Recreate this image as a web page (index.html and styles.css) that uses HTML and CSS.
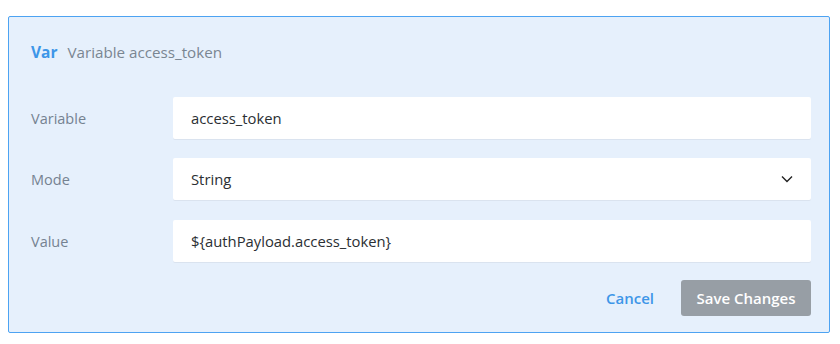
FILE: index.html
```html
<!DOCTYPE html>
<html lang="en">
<head>
    <meta charset="UTF-8">
    <title>Variable access_token</title>
    <link rel="stylesheet" href="styles.css">
</head>
<body>

<!-- Variable editor panel -->
<div class="panel">
    <div class="panel-header">
        <span class="tag">Var</span>
        <span class="title">Variable access_token</span>
    </div>

    <div class="form">
        <div class="row">
            <label>Variable</label>
            <div class="field">access_token</div>
        </div>
        <div class="row">
            <label>Mode</label>
            <div class="field select">
                <span>String</span>
                <svg width="12" height="8" viewBox="0 0 12 8"><path d="M1 1.5l5 5 5-5" fill="none" stroke="#222" stroke-width="1.4"/></svg>
            </div>
        </div>
        <div class="row">
            <label>Value</label>
            <div class="field">${authPayload.access_token}</div>
        </div>
    </div>

    <div class="actions">
        <button class="cancel">Cancel</button>
        <button class="save">Save Changes</button>
    </div>
</div>

</body>
</html>
```

FILE: styles.css
```css
body {
    font-family: "Open Sans", Lato, sans-serif;
    background-color: #fff;
    margin: 0;
    padding: 16px 10px 12px 8px;
}

.panel {
    background-color: #e6f0fc;
    border: 1px solid #4da3f2;
    border-radius: 2px;
    box-sizing: border-box;
    height: 317px;
    padding: 0 18px 0 22px;
}

.panel-header {
    display: flex;
    align-items: baseline;
    height: 70px;
    padding-top: 24px;
    box-sizing: border-box;
}

.tag {
    color: #3d96e8;
    font-weight: bold;
    font-size: 15.5px;
    margin-right: 10px;
}

.title {
    color: #7a8692;
    font-size: 15.2px;
}

.form {
    padding-top: 10px;
}

.row {
    display: flex;
    align-items: center;
    margin-bottom: 19px;
}

.row:nth-child(2) {
    margin-bottom: 20px;
}

.row label {
    width: 142px;
    color: #758291;
    font-size: 14.5px;
}

.field {
    flex: 1;
    height: 42px;
    background-color: #fff;
    border-radius: 2px;
    box-shadow: 0 1px 0 rgba(0, 0, 0, 0.05);
    display: flex;
    align-items: center;
    padding: 0 18px;
    font-size: 14.8px;
    color: #2b2f33;
}

.select {
    justify-content: space-between;
}

.actions {
    display: flex;
    justify-content: flex-end;
    align-items: center;
    gap: 27px;
    margin-top: -1px;
}

.actions button {
    font-family: inherit;
    font-size: 15px;
    font-weight: 600;
    border: none;
    cursor: pointer;
}

.cancel {
    background: none;
    color: #3d96e8;
    padding: 0;
}

.save {
    background-color: #979ea5;
    color: #fff;
    width: 130px;
    height: 36px;
    border-radius: 3px;
    border: 1px solid #8d949b;
}
```
